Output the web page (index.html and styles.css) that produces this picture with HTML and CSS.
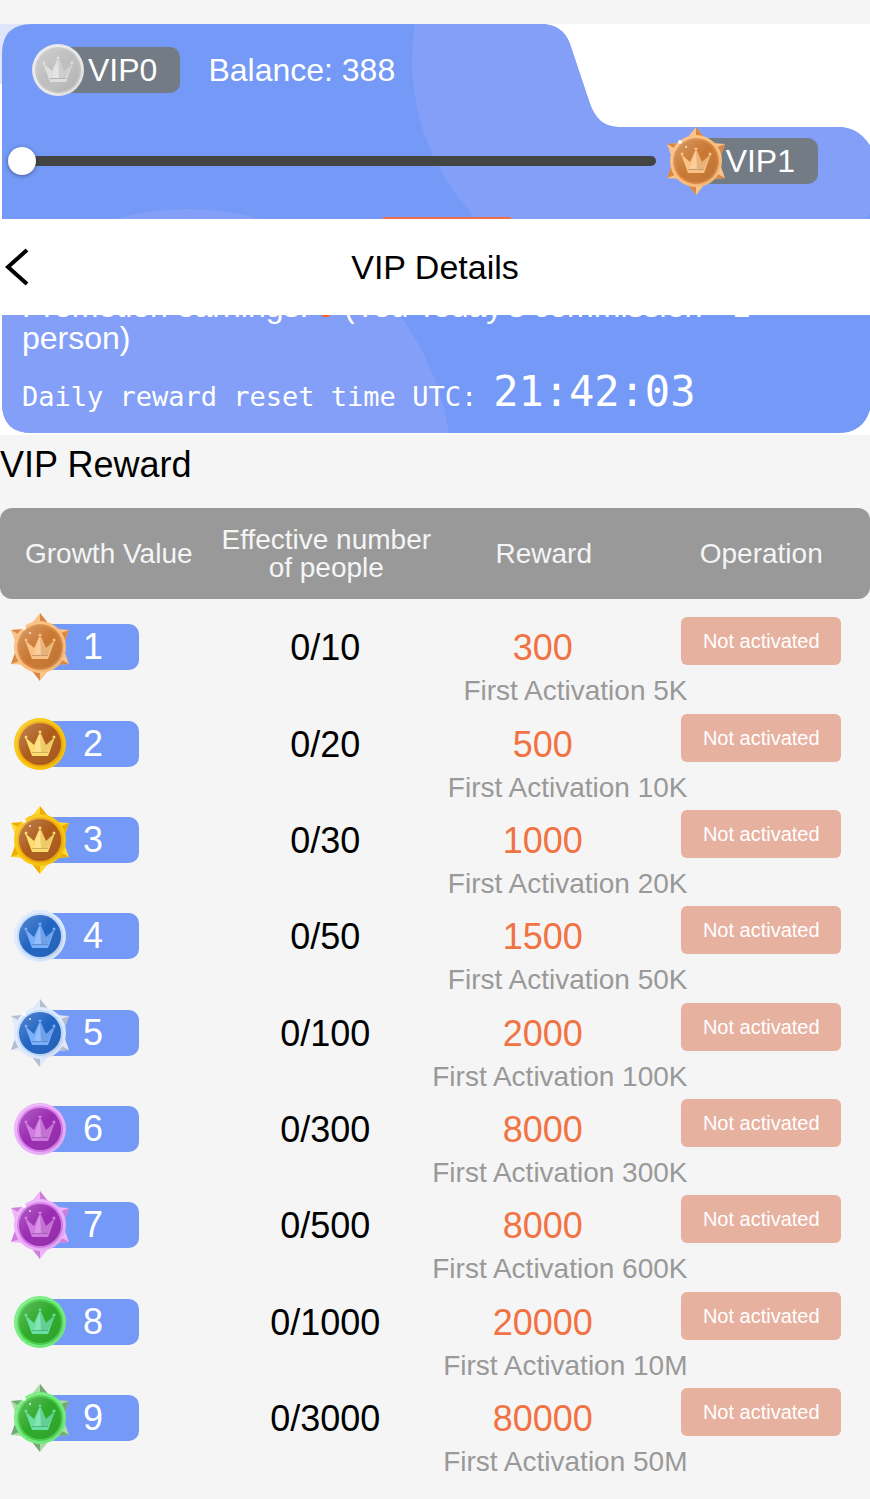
FILE: index.html
```html
<!DOCTYPE html>
<html lang="en">
<head>
<meta charset="utf-8">
<meta name="viewport" content="width=device-width, initial-scale=1">
<title>VIP Details</title>
<link rel="stylesheet" href="styles.css">
</head>
<body>
<svg class="defs" aria-hidden="true">
  <defs>
    <linearGradient id="shade" x1="0" y1="0" x2="1" y2="1">
      <stop offset="0" stop-color="#fff" stop-opacity=".25"/>
      <stop offset=".5" stop-color="#fff" stop-opacity="0"/>
      <stop offset="1" stop-color="#000" stop-opacity=".12"/>
    </linearGradient>
    <g id="crown">
      <path class="crown" d="M15 27 L24 35 L29 24 H31 L36 35 L45 27 L38 46 H22 Z"/>
      <circle class="crown" cx="16" cy="27" r="1.500"/>
      <circle class="crown" cx="30" cy="22" r="1.500"/>
      <circle class="crown" cx="44" cy="27" r="1.500"/>
      <path d="M30 24 L36 35 L45 27 L38 42 H31 Z" fill="#000" opacity=".07"/>
      <path d="M30 24 L24 42 H31 Z" fill="#fff" opacity=".2"/>
      <path d="M22 42.500 H38" stroke="#000" stroke-opacity=".2"/>
    </g>
    <symbol id="coin" viewBox="0 0 60 68">
      <circle class="glow" cx="30" cy="34" r="26"/>
      <circle class="rim" cx="30" cy="34" r="23"/>
      <circle cx="30" cy="34" r="25" fill="url(#shade)"/>
      <circle class="face" cx="30" cy="34" r="21"/>
      <circle cx="30" cy="34" r="21" fill="url(#shade)"/>
      <use href="#crown"/>
    </symbol>
    <symbol id="star" viewBox="0 0 60 68">
      <path class="point" d="M30 0 L38 10 L46 16 L59 17 L55 28 V40 L59 51 L46 52 L38 58 L30 68 L22 58 L14 52 L1 51 L5 40 V28 L1 17 L14 16 L22 10 Z"/>
      <path class="facet" d="M30 0 L38 10 L30 8 Z M59 17 L55 28 L51 20 Z M59 51 L46 52 L52 47 Z M30 68 L22 58 L30 60 Z M1 51 L5 40 L9 48 Z M1 17 L14 16 L8 21 Z"/>
      <circle class="glow" cx="30" cy="34" r="26"/>
      <circle class="rim" cx="30" cy="34" r="23"/>
      <circle cx="30" cy="34" r="25" fill="url(#shade)"/>
      <circle class="face" cx="30" cy="34" r="21"/>
      <circle cx="30" cy="34" r="21" fill="url(#shade)"/>
      <use href="#crown"/>
      <circle cx="14" cy="15" r="2" fill="#fff" opacity=".9"/>
      <circle cx="20" cy="20" r="1" fill="#fff" opacity=".8"/>
    </symbol>
  </defs>
</svg>

<main>
  <section class="hero">
    <svg class="hero-bg" viewBox="0 0 870 411" preserveAspectRatio="none" aria-hidden="true">
      <defs>
        <clipPath id="panel"><path d="M32 0 H540 Q563 0 570 20 L589 77 Q597 103 618 103 H838 Q860 103 872 125 V376 Q868 409 838 409 H32 Q2 409 2 379 V30 Q2 0 32 0 Z"/></clipPath>
      </defs>
      <rect width="40" height="60" fill="#dfe5fb"/>
      <g clip-path="url(#panel)">
        <rect width="870" height="411" fill="#7499f6"/>
        <path d="M415 0 A226 226 0 0 0 486 204 H860 L870 190 V0 Z" fill="#839ff7"/>
        <circle cx="188" cy="449" r="264" fill="#839ff7"/>
      </g>
    </svg>

    <div class="status">
      <span class="badge silver"><svg class="medal"><use href="#coin"/></svg><span class="level">VIP0</span></span>
      <span class="balance">Balance: 388</span>
    </div>
    <div class="progress">
      <input type="range" min="0" max="100" value="0" aria-label="VIP progress">
      <span class="badge bronze"><svg class="medal"><use href="#star"/></svg><span class="level">VIP1</span></span>
    </div>
    <div class="marker"></div>
    <p class="promo">Promotion earnings: <b>0</b> (You Today's commission * 1<br>person)</p>
    <p class="reset">Daily reward reset time UTC:<time>21:42:03</time></p>

    <header class="nav">
      <button class="back" type="button" aria-label="Back"><svg viewBox="0 0 24 40"><path d="M22 3 L3 20 L22 37"/></svg></button>
      <h1>VIP Details</h1>
    </header>
  </section>

  <h2>VIP Reward</h2>
  <table>
    <thead>
      <tr><th>Growth Value</th><th>Effective number of people</th><th>Reward</th><th>Operation</th></tr>
    </thead>
    <tbody>
      <tr>
        <td><span class="badge bronze"><svg class="medal"><use href="#star"/></svg><span class="rank">1</span></span></td>
        <td class="count">0/10</td>
        <td class="reward">300<small>First Activation 5K</small></td>
        <td><button class="activate" type="button">Not activated</button></td>
      </tr>
      <tr>
        <td><span class="badge gold"><svg class="medal"><use href="#coin"/></svg><span class="rank">2</span></span></td>
        <td class="count">0/20</td>
        <td class="reward">500<small>First Activation 10K</small></td>
        <td><button class="activate" type="button">Not activated</button></td>
      </tr>
      <tr>
        <td><span class="badge gold"><svg class="medal"><use href="#star"/></svg><span class="rank">3</span></span></td>
        <td class="count">0/30</td>
        <td class="reward">1000<small>First Activation 20K</small></td>
        <td><button class="activate" type="button">Not activated</button></td>
      </tr>
      <tr>
        <td><span class="badge blue"><svg class="medal"><use href="#coin"/></svg><span class="rank">4</span></span></td>
        <td class="count">0/50</td>
        <td class="reward">1500<small>First Activation 50K</small></td>
        <td><button class="activate" type="button">Not activated</button></td>
      </tr>
      <tr>
        <td><span class="badge blue"><svg class="medal"><use href="#star"/></svg><span class="rank">5</span></span></td>
        <td class="count">0/100</td>
        <td class="reward">2000<small>First Activation 100K</small></td>
        <td><button class="activate" type="button">Not activated</button></td>
      </tr>
      <tr>
        <td><span class="badge purple"><svg class="medal"><use href="#coin"/></svg><span class="rank">6</span></span></td>
        <td class="count">0/300</td>
        <td class="reward">8000<small>First Activation 300K</small></td>
        <td><button class="activate" type="button">Not activated</button></td>
      </tr>
      <tr>
        <td><span class="badge purple"><svg class="medal"><use href="#star"/></svg><span class="rank">7</span></span></td>
        <td class="count">0/500</td>
        <td class="reward">8000<small>First Activation 600K</small></td>
        <td><button class="activate" type="button">Not activated</button></td>
      </tr>
      <tr>
        <td><span class="badge green"><svg class="medal"><use href="#coin"/></svg><span class="rank">8</span></span></td>
        <td class="count">0/1000</td>
        <td class="reward">20000<small>First Activation 10M</small></td>
        <td><button class="activate" type="button">Not activated</button></td>
      </tr>
      <tr>
        <td><span class="badge green"><svg class="medal"><use href="#star"/></svg><span class="rank">9</span></span></td>
        <td class="count">0/3000</td>
        <td class="reward">80000<small>First Activation 50M</small></td>
        <td><button class="activate" type="button">Not activated</button></td>
      </tr>
    </tbody>
  </table>
</main>
</body>
</html>
```

FILE: styles.css
```css
* { box-sizing: border-box; }
body {
  margin: 0;
  background: #f5f5f5;
  color: #000;
  font-family: "Liberation Sans", Arial, sans-serif;
}
main { padding-top: 24px; }
.defs { position: absolute; width: 0; height: 0; }

/* Hero card */
.hero {
  position: relative;
  background: #fff;
  color: #fff;
  font-size: 32px;
  line-height: 32px;
  padding: 12px 0 14px;
}
.hero-bg { position: absolute; inset: 0; width: 100%; height: 100%; }
.hero > div, .hero > p { position: relative; }
.status { display: flex; align-items: center; gap: 28px; padding-left: 28px; }
.progress {
  display: flex;
  align-items: center;
  gap: 10px;
  margin-top: 23px;
  padding: 0 52px 0 8px;
}
.progress input {
  flex: 1;
  min-width: 0;
  height: 28px;
  margin: 0;
  appearance: none;
  background: none;
}
.progress input::-webkit-slider-runnable-track {
  height: 10px;
  border-radius: 5px;
  background: #424542;
}
.progress input::-webkit-slider-thumb {
  appearance: none;
  width: 28px;
  height: 28px;
  margin-top: -9px;
  border-radius: 50%;
  background: #fff;
  box-shadow: 0 1px 4px rgba(0, 0, 0, .4);
}
.marker { width: 128px; height: 48px; margin: 22px auto 0; left: 12px; background: #ee6e49; }
.promo { margin: 25px 22px 0; }
.promo b { color: #fa6030; font-weight: normal; }
.reset {
  display: flex;
  align-items: baseline;
  gap: 16px;
  margin: 14px 22px 0;
  font-family: "DejaVu Sans Mono", monospace;
  font-size: 27px;
  line-height: 48px;
}
.reset time { font-size: 42px; }

/* Title bar floating over the card */
.nav {
  position: absolute;
  top: 195px;
  left: 0;
  right: 0;
  display: flex;
  align-items: center;
  justify-content: center;
  height: 96px;
  background: #fff;
  color: #000;
}
.nav h1 { margin: 0; font-size: 34px; font-weight: normal; }
.back {
  position: absolute;
  left: 5px;
  padding: 0;
  border: 0;
  background: none;
}
.back svg { display: block; width: 24px; height: 40px; fill: none; stroke: #000; stroke-width: 4; }

/* Level badges */
.badge { display: flex; align-items: center; }
.medal { position: relative; z-index: 1; flex: none; width: 60px; height: 68px; }
.level, .rank {
  height: 46px;
  margin-left: -30px;
  border-radius: 0 10px 10px 0;
  line-height: 46px;
}
.level { padding: 0 23px 0 30px; background: #737b84; font-size: 32px; }
.rank { padding: 0 36px 0 43px; background: #7499f6; color: #fff; font-size: 36px; }
.crown { fill: var(--crown); }
.glow { fill: var(--glow); }
.rim { fill: var(--rim); }
.face { fill: var(--face); }
.point { fill: var(--point); }
.facet { fill: var(--facet); }
.silver { --crown: #dedede; --glow: #e8e8e8; --rim: #c4c4c4; --face: #bebebe; }
.bronze { --crown: #fac184; --glow: #fbbd7b; --rim: #d8863f; --face: #c97832; --point: #fac58d; --facet: #d98845; }
.gold { --crown: #ffdc70; --glow: #f8c60c; --rim: #f1a705; --face: #ad5b1b; --point: #fed936; --facet: #edad04; }
.blue { --crown: #78aefa; --glow: #dceaff; --rim: #bdd6fa; --face: #2163c1; --point: #e1e9f6; --facet: #b1bdd0; }
.purple { --crown: #d17be2; --glow: #ebaefa; --rim: #d576ea; --face: #982bb0; --point: #efb5f8; --facet: #cf7ddd; }
.green { --crown: #69dfa0; --glow: #72ed7d; --rim: #48cf4c; --face: #2da929; --point: #a9dda5; --facet: #75a875; }

/* Rewards */
h2 { margin: 0; padding: 12px 0 25px; font-size: 36px; line-height: 36px; font-weight: normal; }
table { width: 100%; table-layout: fixed; border-collapse: separate; border-spacing: 0; }
th {
  height: 91px;
  padding: 0;
  background: #999;
  color: #f5f5f5;
  font-size: 28px;
  line-height: 28px;
  font-weight: normal;
}
th:first-child { border-radius: 12px 0 0 12px; }
th:last-child { border-radius: 0 12px 12px 0; }
tbody::before { content: ""; display: block; height: 14px; }
tbody tr { height: 96px; }
tbody tr:nth-child(3n+1) { height: 97px; }
td { padding: 0; vertical-align: top; text-align: center; }
td .badge { padding-left: 10px; }
.count, .reward { padding: 17px 2px 0 0; font-size: 36px; line-height: 36px; }
.reward { color: #f17242; }
.reward small {
  display: block;
  margin: 11px -37px 0 -10px;
  color: #999;
  font-size: 28px;
  line-height: 28px;
  text-align: right;
  white-space: nowrap;
}
.activate {
  width: 160px;
  height: 48px;
  margin-top: 4px;
  padding: 0;
  border: 0;
  border-radius: 6px;
  background: #e7b19f;
  color: #fff;
  font: 20px "Liberation Sans", Arial, sans-serif;
}
```
